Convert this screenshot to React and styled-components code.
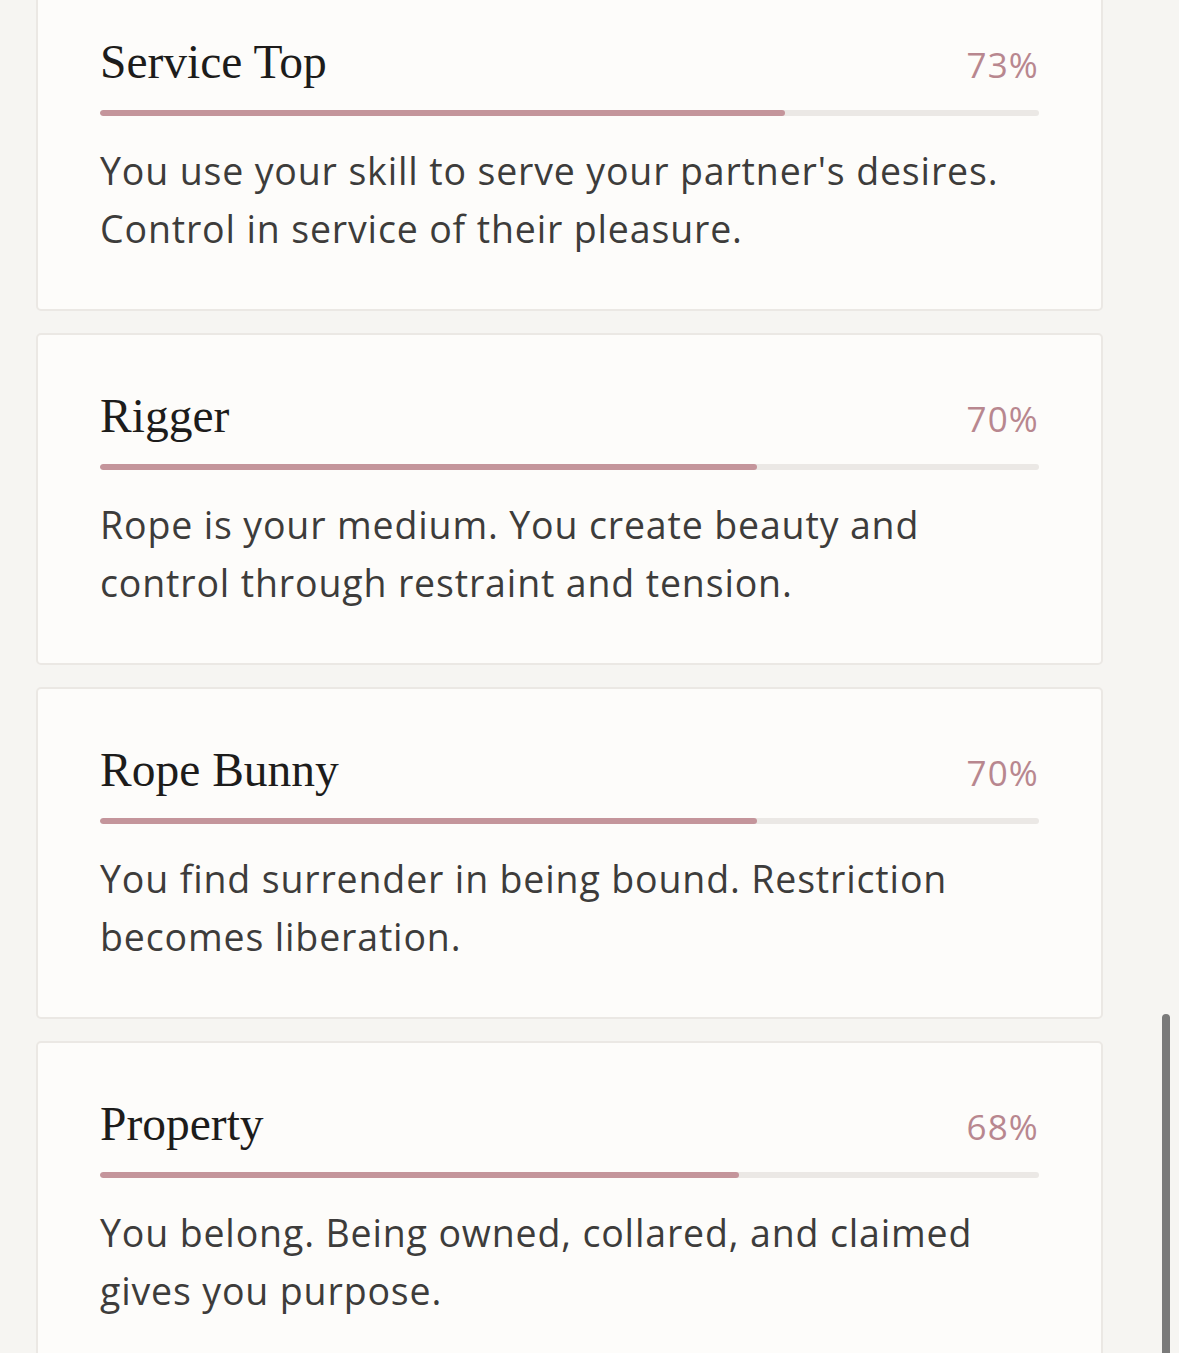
import React from "react";
import styled, { createGlobalStyle } from "styled-components";

const Global = createGlobalStyle`
  html, body { margin: 0; padding: 0; background: #f6f5f2; }
  body { overflow: hidden; height: 1353px; }
`;

const Page = styled.div`
  position: relative;
  height: 1353px;
  overflow: hidden;
  background: #f6f5f2;
`;

const List = styled.div`
  display: flex;
  flex-direction: column;
  gap: 22px;
  margin: -21px 76px 0 36px;
`;

const Card = styled.section`
  box-sizing: border-box;
  height: 332px;
  background: #fdfcfa;
  border: 2px solid #ebe8e4;
  border-radius: 5px;
  padding: 53px 62px 0 62px;
`;

const Head = styled.div`
  display: flex;
  justify-content: space-between;
  align-items: baseline;
`;

const Title = styled.h2`
  margin: 0;
  font-family: "Liberation Serif", "DejaVu Serif", serif;
  font-weight: 400;
  font-size: 47.5px;
  line-height: 56px;
  color: #1d1c1b;
`;

const Pct = styled.span`
  font-family: "Open Sans", Lato, sans-serif;
  font-weight: 400;
  font-size: 35px;
  color: #b8878f;
  letter-spacing: 1.2px;
`;

const Track = styled.div`
  height: 6px;
  margin-top: 20px;
  border-radius: 3px;
  background: #ebe8e5;
  overflow: hidden;
`;

const Fill = styled.div`
  height: 100%;
  border-radius: 3px;
  background: #c4959b;
`;

const Desc = styled.p`
  margin: 26px 0 0;
  font-family: "Open Sans", Lato, sans-serif;
  font-weight: 400;
  font-size: 37.5px;
  line-height: 58px;
  color: #3d3c3b;
  letter-spacing: 0.85px;
`;

const Scrollbar = styled.div`
  position: absolute;
  right: 9px;
  top: 1014px;
  width: 8px;
  height: 360px;
  border-radius: 4px;
  background: #7a7a7a;
`;

const items = [
  { t: "Service Top", p: 73, d: "You use your skill to serve your partner's desires. Control in service of their pleasure." },
  { t: "Rigger", p: 70, d: "Rope is your medium. You create beauty and control through restraint and tension." },
  { t: "Rope Bunny", p: 70, d: "You find surrender in being bound. Restriction becomes liberation." },
  { t: "Property", p: 68, d: "You belong. Being owned, collared, and claimed gives you purpose." },
];

export default function App() {
  return (
    <Page>
      <Global />
      <List>
        {items.map((it) => (
          <Card key={it.t}>
            <Head>
              <Title>{it.t}</Title>
              <Pct>{it.p}%</Pct>
            </Head>
            <Track>
              <Fill style={{ width: `${it.p}%` }} />
            </Track>
            <Desc>{it.d}</Desc>
          </Card>
        ))}
      </List>
      <Scrollbar />
    </Page>
  );
}
